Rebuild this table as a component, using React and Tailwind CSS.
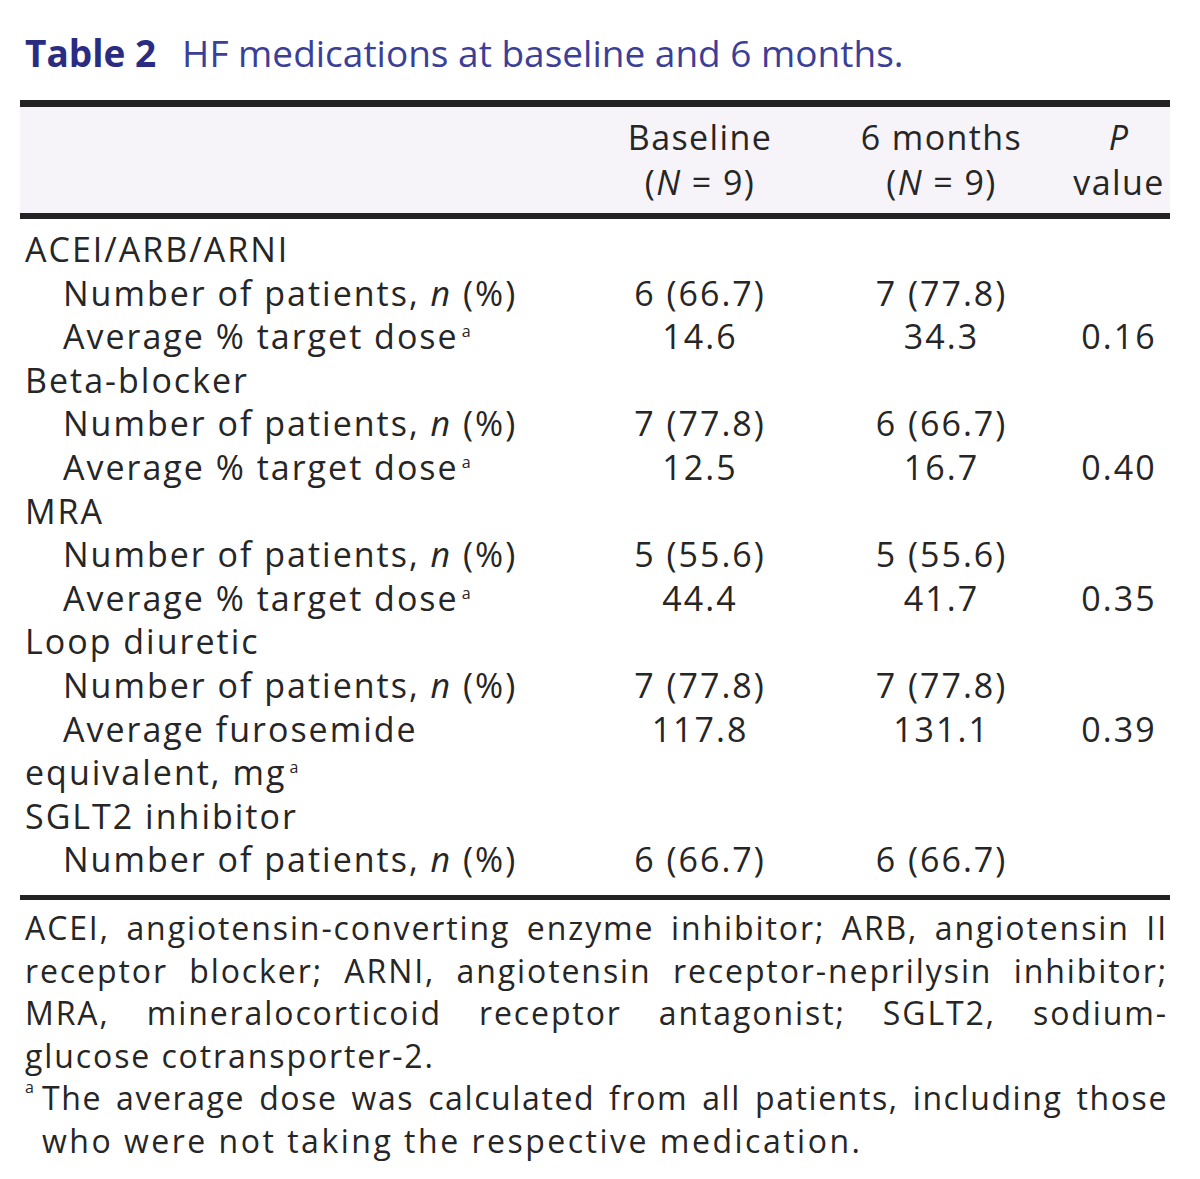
const rows = [
  { label: "ACEI/ARB/ARNI", group: true },
  { label: <>Number of patients, <i>n</i> (%)</>, base: "6 (66.7)", six: "7 (77.8)" },
  { label: "Average % target dose", sup: true, base: "14.6", six: "34.3", p: "0.16" },
  { label: "Beta-blocker", group: true },
  { label: <>Number of patients, <i>n</i> (%)</>, base: "7 (77.8)", six: "6 (66.7)" },
  { label: "Average % target dose", sup: true, base: "12.5", six: "16.7", p: "0.40" },
  { label: "MRA", group: true },
  { label: <>Number of patients, <i>n</i> (%)</>, base: "5 (55.6)", six: "5 (55.6)" },
  { label: "Average % target dose", sup: true, base: "44.4", six: "41.7", p: "0.35" },
  { label: "Loop diuretic", group: true },
  { label: <>Number of patients, <i>n</i> (%)</>, base: "7 (77.8)", six: "7 (77.8)" },
  { label: "Average furosemide equivalent, mg", sup: true, base: "117.8", six: "131.1", p: "0.39" },
  { label: "SGLT2 inhibitor", group: true },
  { label: <>Number of patients, <i>n</i> (%)</>, base: "6 (66.7)", six: "6 (66.7)" },
];

const Sup = () => (
  <span className="relative -top-[12px] ml-[3px] text-[16px] leading-none tracking-normal">a</span>
);

// footnote lines, each stretched to the full width like the printed table
const notes = [
  "ACEI, angiotensin-converting enzyme inhibitor; ARB, angiotensin II",
  "receptor blocker; ARNI, angiotensin receptor-neprilysin inhibitor;",
  "MRA, mineralocorticoid receptor antagonist; SGLT2, sodium-",
];

export default function App() {
  return (
    <div className="min-h-[1179px] w-[1200px] bg-white font-['Open_Sans',sans-serif] text-[#262626]">
      <div className="w-[1150px] ml-[20px] pt-[27px]">
        <h1 className="pl-[5px] text-[37px] leading-[52px] text-[#3c3f97]">
          <span className="font-bold text-[#2a2c82]">Table 2</span>
          <span className="ml-[26px]">HF medications at baseline and 6 months.</span>
        </h1>

        <div className="mt-[21px] border-t-[7px] border-[#232323]">
          {/* header */}
          <div className="grid grid-cols-[565px_230px_253px_102px] border-b-[6px] border-[#232323] bg-[#f6f4f9] py-[8px] text-[34px] leading-[45px] tracking-[1.4px]">
            <div />
            <div className="text-center">
              Baseline
              <br />(<i>N</i> = 9)
            </div>
            <div className="text-center">
              6 months
              <br />(<i>N</i> = 9)
            </div>
            <div className="text-center">
              <i>P</i>
              <br />value
            </div>
          </div>

          {/* body */}
          <div className="pt-[9px] pb-[13px] text-[34px] leading-[43.6px] tracking-[2px]">
            {rows.map((r, i) => (
              <div key={i} className="grid grid-cols-[565px_230px_253px_102px]">
                <div className={r.group ? "pl-[5px]" : "pl-[5px] indent-[38px]"}>
                  {r.label}
                  {r.sup && <Sup />}
                </div>
                <div className="text-center">{r.base}</div>
                <div className="text-center">{r.six}</div>
                <div className="text-center">{r.p}</div>
              </div>
            ))}
          </div>
        </div>

        {/* footnote */}
        <div className="border-t-[5px] border-[#232323] pl-[5px] pr-[2px] pt-[7px] text-[32px] leading-[42.6px] tracking-[1.9px]">
          {notes.map((line) => (
            <div key={line} className="text-justify [text-align-last:justify] whitespace-nowrap">
              {line}
            </div>
          ))}
          <div>glucose cotransporter-2.</div>
          <div className="flex">
            <span className="relative top-[2px] w-[17px] shrink-0 text-[16px] leading-none tracking-normal">a</span>
            <div className="flex-1 min-w-0">
              <div className="text-justify [text-align-last:justify] whitespace-nowrap tracking-[1.6px]">
                The average dose was calculated from all patients, including those
              </div>
              <div className="tracking-[2.5px]">who were not taking the respective medication.</div>
            </div>
          </div>
        </div>
      </div>
    </div>
  );
}
